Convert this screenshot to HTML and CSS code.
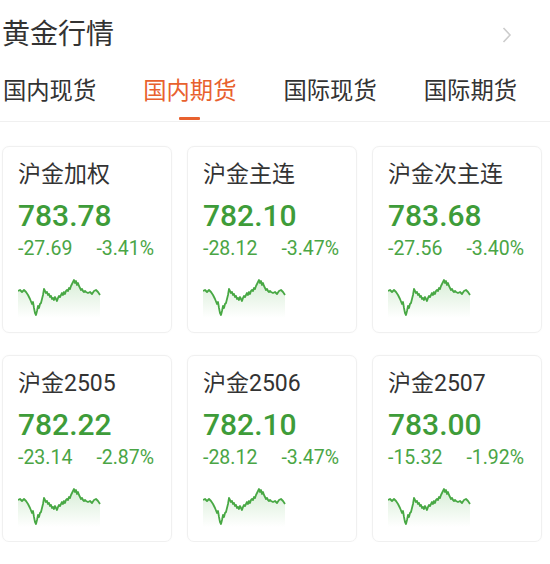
FILE: index.html
```html
<!DOCTYPE html>
<html lang="zh">
<head>
<meta charset="utf-8">
<link rel="stylesheet" href="styles.css">
</head>
<body>
<svg width="0" height="0" class="defs">
  <defs>
    <linearGradient id="fillg" x1="0" y1="0" x2="0" y2="1">
      <stop offset="0" stop-color="#4caf46" stop-opacity="0.22"/>
      <stop offset="1" stop-color="#4caf46" stop-opacity="0"/>
    </linearGradient>
    <symbol id="spark" viewBox="0 0 84 40">
      <path fill="url(#fillg)" d="M0,13 L2,12 L4,14 L6,12 L8,14 L10,17 L12,21 L14,26 L15,24 L16,30 L17,35 L18,37 L19,33 L20,28 L21,30 L22,26 L23,25 L24,21 L25,17 L26,11 L27,13 L28,15 L29,14 L30,17 L31,16 L32,19 L33,18 L34,21 L35,20 L36,22 L37,19 L38,21 L39,23 L40,20 L41,18 L42,19 L43,17 L44,15 L45,17 L46,14 L47,16 L48,13 L49,12 L50,13 L51,10 L52,11 L53,8 L54,6 L55,4 L56,2 L57,5 L58,3 L59,7 L60,5 L61,8 L62,10 L63,12 L64,11 L65,13 L66,14 L67,13 L68,14 L70,15 L72,14 L74,16 L76,13 L78,12 L80,14 L82,17 L82,40 L0,40 Z"/>
      <polyline fill="none" stroke="#48a844" stroke-width="1.8" stroke-linejoin="round" points="0,13 2,12 4,14 6,12 8,14 10,17 12,21 14,26 15,24 16,30 17,35 18,37 19,33 20,28 21,30 22,26 23,25 24,21 25,17 26,11 27,13 28,15 29,14 30,17 31,16 32,19 33,18 34,21 35,20 36,22 37,19 38,21 39,23 40,20 41,18 42,19 43,17 44,15 45,17 46,14 47,16 48,13 49,12 50,13 51,10 52,11 53,8 54,6 55,4 56,2 57,5 58,3 59,7 60,5 61,8 62,10 63,12 64,11 65,13 66,14 67,13 68,14 70,15 72,14 74,16 76,13 78,12 80,14 82,17"/>
    </symbol>
  </defs>
</svg>
<div class="page">
  <div class="header">
    <div class="title">黄金行情</div>
    <svg class="chev" width="12" height="18" viewBox="0 0 12 18"><path d="M2.5,2 L9,9 L2.5,16" fill="none" stroke="#cccccc" stroke-width="1.6"/></svg>
  </div>
  <div class="tabs">
    <div class="tab">国内现货</div>
    <div class="tab active">国内期货</div>
    <div class="tab">国际现货</div>
    <div class="tab">国际期货</div>
  </div>
  <div class="grid">
    <div class="card">
      <div class="name">沪金加权</div>
      <div class="price">783.78</div>
      <div class="chg"><span>-27.69</span><span>-3.41%</span></div>
      <svg class="spark"><use href="#spark"/></svg>
    </div>
    <div class="card">
      <div class="name">沪金主连</div>
      <div class="price">782.10</div>
      <div class="chg"><span>-28.12</span><span>-3.47%</span></div>
      <svg class="spark"><use href="#spark"/></svg>
    </div>
    <div class="card">
      <div class="name">沪金次主连</div>
      <div class="price">783.68</div>
      <div class="chg"><span>-27.56</span><span>-3.40%</span></div>
      <svg class="spark"><use href="#spark"/></svg>
    </div>
    <div class="card">
      <div class="name">沪金2505</div>
      <div class="price">782.22</div>
      <div class="chg"><span>-23.14</span><span>-2.87%</span></div>
      <svg class="spark"><use href="#spark"/></svg>
    </div>
    <div class="card">
      <div class="name">沪金2506</div>
      <div class="price">782.10</div>
      <div class="chg"><span>-28.12</span><span>-3.47%</span></div>
      <svg class="spark"><use href="#spark"/></svg>
    </div>
    <div class="card">
      <div class="name">沪金2507</div>
      <div class="price">783.00</div>
      <div class="chg"><span>-15.32</span><span>-1.92%</span></div>
      <svg class="spark"><use href="#spark"/></svg>
    </div>
  </div>
</div>
</body>
</html>
```
FILE: styles.css
```css
html, body {
  margin: 0;
  padding: 0;
  background: #ffffff;
}
body {
  font-family: Roboto, "Noto Sans CJK SC", sans-serif;
  color: #333333;
  width: 550px;
  overflow: hidden;
}
.defs {
  position: absolute;
  width: 0;
  height: 0;
}
.page {
  display: flex;
  flex-direction: column;
}
.header {
  height: 66px;
  display: flex;
  align-items: center;
  justify-content: space-between;
  padding: 0 37px 0 2px;
}
.title {
  font-size: 28px;
  line-height: 32px;
  color: #333333;
  font-family: "Noto Sans CJK SC", sans-serif;
  margin-top: -2px;
}
.chev {
  display: block;
  margin-top: 3px;
}
.tabs {
  display: flex;
  justify-content: space-between;
  height: 55px;
  border-bottom: 1px solid #f0f0f0;
  padding: 0 33px 0 3px;
}
.tab {
  font-family: "Noto Sans CJK SC", sans-serif;
  font-size: 23.3px;
  line-height: 46px;
  color: #333333;
  position: relative;
}
.tab.active {
  color: #e8612e;
}
.tab.active::after {
  content: "";
  position: absolute;
  left: 36px;
  top: 51px;
  width: 21px;
  height: 3px;
  background: #e8612e;
  border-radius: 1px;
}
.grid {
  display: grid;
  grid-template-columns: repeat(3, 170px);
  grid-auto-rows: 187px;
  column-gap: 15px;
  row-gap: 22px;
  padding: 24px 0 0 2px;
}
.card {
  border: 1px solid #f0f0f0;
  border-radius: 7px;
  box-shadow: 0 0 2px rgba(0,0,0,0.03);
  padding: 14px 0 0 15px;
  display: flex;
  flex-direction: column;
}
.name {
  font-size: 23px;
  line-height: 28px;
  color: #333333;
}
.price {
  font-size: 30px;
  line-height: 38px;
  color: #3e9c39;
  font-weight: 500;
  margin-top: 8px;
}
.chg {
  display: flex;
  gap: 24px;
  font-size: 19.5px;
  line-height: 26px;
  color: #4aa545;
  margin-top: 1px;
}
.spark {
  width: 84px;
  height: 40px;
  margin-top: 16px;
  margin-left: 0px;
}
```
